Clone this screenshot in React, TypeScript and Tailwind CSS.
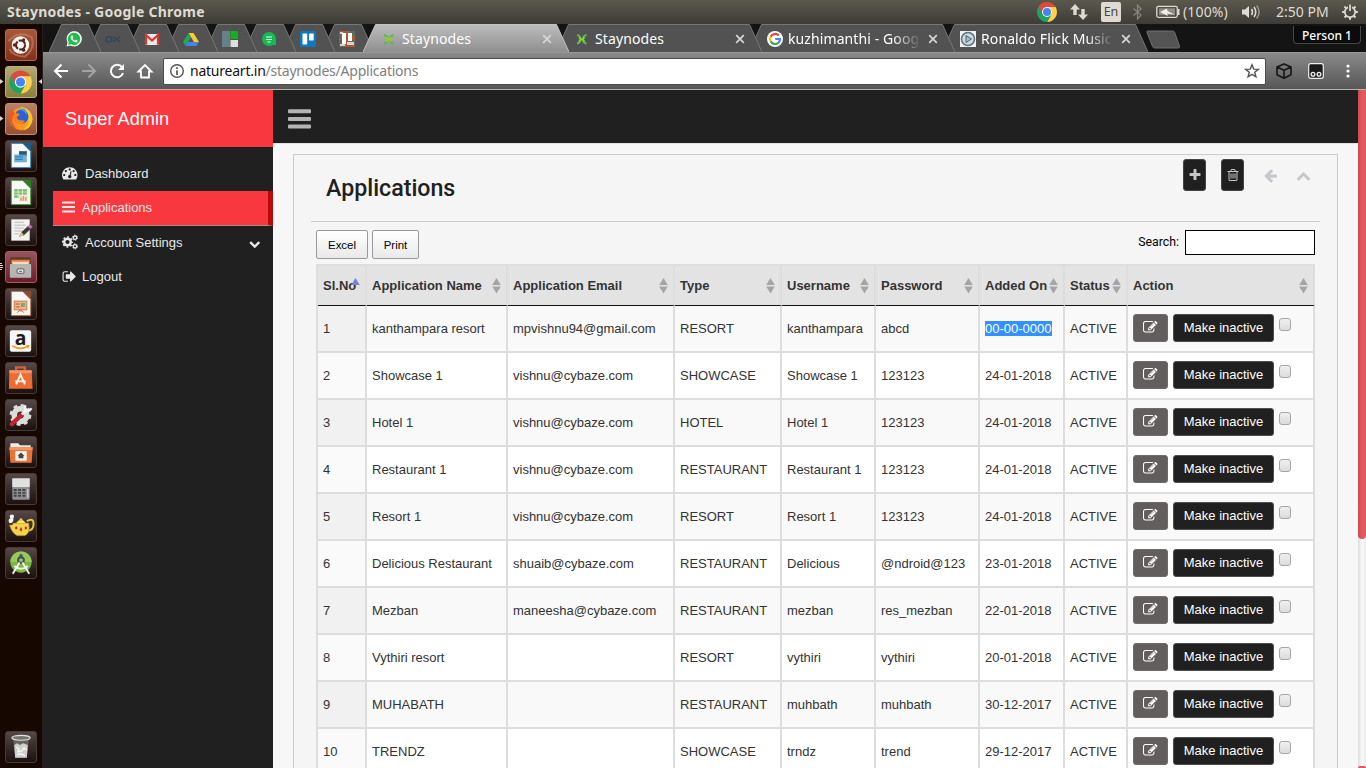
import React from "react";

const UBUNTU = "font-['Noto_Sans','Open_Sans',sans-serif]";

const GLYPHS = {
  edit: "M888 1184l116-116-152-152-116 116v56h96v96h56zm440-720q-16-16-33 1l-350 350q-17 17-1 33t33-1l350-350q17-17 1-33zm80 594v190q0 119-84.5 203.5t-203.5 84.5h-832q-119 0-203.5-84.5t-84.5-203.5v-832q0-119 84.5-203.5t203.5-84.5h832q63 0 117 25 15 7 18 23 3 17-9 29l-49 49q-14 14-32 8-23-6-45-6h-832q-66 0-113 47t-47 113v832q0 66 47 113t113 47h832q66 0 113-47t47-113v-126q0-13 9-22l64-64q15-15 35-7t20 29zm-96-738l288 288-672 672h-288v-288zm444 132l-92 92-288-288 92-92q28-28 68-28t68 28l152 152q28 28 28 68t-28 68z",
  plus: "M1600 736v192q0 40-28 68t-68 28h-416v416q0 40-28 68t-68 28h-192q-40 0-68-28t-28-68v-416h-416q-40 0-68-28t-28-68v-192q0-40 28-68t68-28h416v-416q0-40 28-68t68-28h192q40 0 68 28t28 68v416h416q40 0 68 28t28 68z",
  trash: "M704 736v576q0 14-9 23t-23 9h-64q-14 0-23-9t-9-23v-576q0-14 9-23t23-9h64q14 0 23 9t9 23zm256 0v576q0 14-9 23t-23 9h-64q-14 0-23-9t-9-23v-576q0-14 9-23t23-9h64q14 0 23 9t9 23zm256 0v576q0 14-9 23t-23 9h-64q-14 0-23-9t-9-23v-576q0-14 9-23t23-9h64q14 0 23 9t9 23zm128 724v-948h-896v948q0 22 7 40.5t14.5 27 10.5 8.5h832q3 0 10.500-8.500t14.500-27 7-40.500zm-672-1076h448l-48-117q-7-9-17-11h-317q-10 2-17 11zm928 32v64q0 14-9 23t-23 9h-96v948q0 83-47 143.500t-113 60.500h-832q-66 0-113-58.500t-47-141.500v-952h-96q-14 0-23-9t-9-23v-64q0-14 9-23t23-9h309l70-167q15-37 54-63t79-26h320q40 0 79 26t54 63l70 167h309q14 0 23 9t9 23z",
  arrowLeft: "M1664 896v128q0 53-32.5 90.5t-84.5 37.5h-704l293 294q38 36 38 90t-38 90l-75 76q-37 37-90 37-52 0-91-37l-651-652q-37-37-37-90 0-52 37-91l651-650q38-38 91-38 52 0 90 38l75 74q38 38 38 91t-38 91l-293 293h704q52 0 84.5 37.5t32.5 90.5z",
  chevronUp: "M1683 1331l-166 165q-19 19-45 19t-45-19l-531-531-531 531q-19 19-45 19t-45-19l-166-165q-19-19-19-45.5t19-45.5l742-741q19-19 45-19t45 19l742 741q19 19 19 45.5t-19 45.5z",
  chevronDown: "M1683 808l-742 741q-19 19-45 19t-45-19l-742-741q-19-19-19-45.5t19-45.5l166-165q19-19 45-19t45 19l531 531 531-531q19-19 45-19t45 19l166 165q19 19 19 45.5t-19 45.5z",
  signOut: "M704 1440q0 4 1 20t.5 26.5-3 23.5-10 19.5-20.5 6.5h-320q-119 0-203.5-84.5t-84.5-203.5v-704q0-119 84.5-203.5t203.5-84.5h320q13 0 22.5 9.5t9.5 22.5q0 4 1 20t.5 26.5-3 23.5-10 19.5-20.5 6.5h-320q-66 0-113 47t-47 113v704q0 66 47 113t113 47h312l11.5 1 11.5 3 8 5.5 7 9 2 13.5zm928-544q0 26-19 45l-544 544q-19 19-45 19t-45-19-19-45v-288h-448q-26 0-45-19t-19-45v-384q0-26 19-45t45-19h448v-288q0-26 19-45t45-19 45 19l544 544q19 19 19 45z",
  dashboard: "M384 1152q0-53-37.5-90.5t-90.5-37.5-90.5 37.5-37.5 90.5 37.5 90.5 90.5 37.5 90.5-37.5 37.5-90.5zm192-448q0-53-37.5-90.5t-90.5-37.5-90.5 37.5-37.5 90.5 37.5 90.5 90.5 37.5 90.5-37.5 37.5-90.5zm428 481l101-382q6-26-7.5-48.5t-38.5-29.5-48 6.5-30 39.5l-101 382q-60 5-107 43.5t-63 98.5q-20 77 20 146t117 89 146-20 89-117q16-60-6-117t-72-91zm660-33q0-53-37.5-90.5t-90.5-37.5-90.5 37.5-37.5 90.5 37.5 90.5 90.5 37.5 90.5-37.5 37.5-90.5zm-640-640q0-53-37.5-90.5t-90.5-37.5-90.5 37.5-37.5 90.5 37.5 90.5 90.5 37.5 90.5-37.5 37.5-90.5zm448 192q0-53-37.5-90.5t-90.5-37.5-90.5 37.5-37.5 90.5 37.5 90.5 90.5 37.5 90.5-37.5 37.5-90.5zm320 448q0 261-141 483-19 29-54 29h-1402q-35 0-54-29-141-221-141-483 0-182 71-348t191-286 286-191 348-71 348 71 286 191 191 286 71 348z",
};

function Glyph({ name, className = "" }: { name: keyof typeof GLYPHS; className?: string }) {
  return (
    <svg viewBox="0 0 1792 1792" fill="currentColor" className={`block shrink-0 ${className}`}>
      <path d={GLYPHS[name]} />
    </svg>
  );
}

function CogsIcon() {
  return (
    <svg viewBox="0 0 16 16" className="block h-4 w-4 shrink-0" fill="none" stroke="currentColor">
      <circle cx="5.500" cy="8" r="3.300" strokeWidth="2.400" />
      <circle cx="5.500" cy="8" r="4.900" strokeWidth="1.500" strokeDasharray="1.950 1.900" strokeDashoffset="1" />
      <circle cx="13" cy="3.700" r="1.700" strokeWidth="1.300" />
      <circle cx="13" cy="3.700" r="2.600" strokeWidth=".9" strokeDasharray="1.400 1.320" />
      <circle cx="13" cy="12.300" r="1.700" strokeWidth="1.300" />
      <circle cx="13" cy="12.300" r="2.600" strokeWidth=".9" strokeDasharray="1.400 1.320" />
    </svg>
  );
}

function ChromeLogo({ className }: { className: string }) {
  const sector = "M-8.66-5A10 10 0 0 1 8.66-5L0-5L-4.33 2.5Z";
  return (
    <svg viewBox="-10 -10 20 20" className={className}>
      <path d={sector} fill="#dd4b3e" />
      <path d={sector} fill="#fdd049" transform="rotate(120)" />
      <path d={sector} fill="#1da462" transform="rotate(240)" />
      <circle r="5" fill="#f4f4f4" />
      <circle r="4" fill="#4285f4" />
    </svg>
  );
}

/* ---------- desktop panel ---------- */

function TopPanel() {
  return (
    <div className={`flex h-6 items-center bg-linear-to-b from-[#5b594e] to-[#3d3c37] pl-[7px] text-[#dfdbd2] ${UBUNTU}`}>
      <span className="text-[14px] leading-6 font-bold tracking-[0.250px]">Staynodes - Google Chrome</span>
      <div className="ml-auto flex h-6 items-center">
        <ChromeLogo className="h-5 w-5" />
        <svg viewBox="0 0 18 16" className="ml-[13px] h-4 w-[18px]" fill="#dfdbd2">
          <path d="M5 0L10 5.500H6.700V11H3.300V5.500H0zM13 16L8 10.500H11.300V5H14.700V10.500H18z" />
        </svg>
        <span className="ml-[13px] flex h-5 w-5 items-center justify-center rounded-[2px] bg-[#dfdbd2] text-[12.500px] text-[#45443e]">En</span>
        <svg viewBox="0 0 9 16" className="ml-[12px] h-4 w-[9px]" fill="none" stroke="#88867c" strokeWidth="1.200">
          <path d="M0.500 4.500L8 11L4.500 15V1L8 5L0.500 11.500" />
        </svg>
        <svg viewBox="0 0 25 14" className="ml-[14px] h-[14px] w-[25px]">
          <rect x="0.800" y="1.300" width="20.500" height="11" rx="1.500" fill="none" stroke="#dfdbd2" strokeWidth="1.300" />
          <rect x="3" y="3.300" width="16" height="7" fill="#8f8c83" />
          <path d="M22 4h1.500v6H22z" fill="#dfdbd2" />
          <path d="M4 7L11 3.500L11.500 6L18.500 9.500L11 8.500L12 11z" fill="#f2efe8" />
        </svg>
        <span className="ml-[2px] w-[47px] text-[14px] leading-6 tracking-[0.150px] whitespace-nowrap">(100%)</span>
        <svg viewBox="0 0 20 16" className="ml-[11px] h-4 w-5" fill="none" stroke="#dfdbd2" strokeWidth="1.500">
          <path d="M1 5.500h3L8 2v12L4 10.500H1z" fill="#dfdbd2" stroke="none" />
          <path d="M10.500 5Q12.500 8 10.500 11" />
          <path d="M13 3Q16.500 8 13 13" />
          <path d="M15.700 1.500Q20.500 8 15.700 14.500" stroke="#99968c" />
        </svg>
        <span className="ml-[15px] w-[54px] text-[14px] leading-6 whitespace-nowrap">2:50 PM</span>
        <svg viewBox="-8 -8 16 16" className="mr-[8px] ml-[12px] h-4 w-4" fill="none" stroke="#dfdbd2">
          <path d="M-2-4.800A5.200 5.200 0 1 0 2-4.800" strokeWidth="1.700" />
          <path d="M0-7.500V-1" strokeWidth="1.700" />
          <path d="M5 0H7.800M-5 0H-7.800M0 5V7.800M3.700 3.700L5.500 5.500M-3.700 3.700L-5.500 5.500M3.900-3.900L5.500-5.500M-3.900-3.900L-5.500-5.500" strokeWidth="2" />
        </svg>
      </div>
    </div>
  );
}

/* ---------- launcher ---------- */

const DARK_TILE = "bg-linear-to-b from-[#554846] to-[#1d1210] border-[#463a37]";

function DocPage({ accent, dark, children }: { accent: string; dark: string; children: React.ReactNode }) {
  return (
    <>
      <path d="M6 3H18L26 11V28H6z" fill="#f7f8f7" stroke={accent} />
      <path d="M17.500 2.500H26.500V11.500z" fill={dark} />
      {children}
    </>
  );
}

const launcher: { tile: string; art: React.ReactNode }[] = [
  {
    tile: "bg-linear-to-b from-[#a9583a] to-[#83301a] border-[#b06a50]",
    art: (
      <>
        <path d="M3 12Q14 0 27 8Q31 20 20 28Q8 28 4 20" fill="none" stroke="#c58a74" strokeWidth="2" opacity=".6" />
        <circle cx="15.500" cy="16" r="9" fill="#fdf6f2" />
        <circle cx="15.500" cy="16" r="4.700" fill="none" stroke="#54231b" strokeWidth="2.200" strokeDasharray="8.600 1.240" />
        <circle cx="9.200" cy="16" r="1.700" fill="#54231b" />
        <circle cx="18.700" cy="10.600" r="1.700" fill="#54231b" />
        <circle cx="18.700" cy="21.400" r="1.700" fill="#54231b" />
      </>
    ),
  },
  {
    tile: "bg-linear-to-b from-[#b3a870] to-[#8a7f3e] border-[#b9b183]",
    art: (
      <g transform="translate(15.500 16) scale(1.180)">
        <path d="M-8.660-5A10 10 0 0 1 8.660-5L0-5L-4.330 2.500Z" fill="#dd4b3e" />
        <path d="M-8.660-5A10 10 0 0 1 8.660-5L0-5L-4.330 2.500Z" fill="#fdd049" transform="rotate(120)" />
        <path d="M-8.660-5A10 10 0 0 1 8.660-5L0-5L-4.330 2.500Z" fill="#1da462" transform="rotate(240)" />
        <circle r="5" fill="#f4f4f4" />
        <circle r="4" fill="#4285f4" />
      </g>
    ),
  },
  {
    tile: "bg-linear-to-b from-[#b98264] to-[#96512f] border-[#c09076]",
    art: (
      <>
        <circle cx="16" cy="16" r="11.500" fill="#ff9420" />
        <path d="M15 3.500Q27 4 28 16Q27 26 18 27.800Q25 22 23.500 14Q22 8 15 3.500z" fill="#ffc62a" />
        <circle cx="16.500" cy="13.500" r="7.200" fill="#2a62d8" />
        <path d="M15 6.500Q20 7.500 21.500 12Q22.500 8 19.500 5.500Q17 4.500 15 6.500z" fill="#35a5ee" />
        <path d="M6 6.500L9.500 10Q12 9.500 14.500 11Q14 13 11.500 14Q12 17 15.500 17.500Q18 17 20 18Q18 21.500 14 21Q8 20 7 14L4.500 16Q4 10 6 6.500z" fill="#ff8016" />
        <path d="M6 6.500Q4 10 4.500 17Q6 25 13 27.500Q5 21 7.500 13L9.500 10z" fill="#f5532a" />
      </>
    ),
  },
  {
    tile: DARK_TILE,
    art: (
      <DocPage accent="#3a8cc0" dark="#1d5c8c">
        <rect x="14" y="11" width="8" height="5" fill="#235a7c" />
        <rect x="9" y="14.500" width="13" height="8" fill="#5fa9d4" opacity=".9" />
        <path d="M10 17h8M10 19.500h8" stroke="#2c77a8" />
      </DocPage>
    ),
  },
  {
    tile: DARK_TILE,
    art: (
      <DocPage accent="#47a838" dark="#2c7f20">
        <rect x="9" y="12" width="13" height="9" fill="#76bb5f" />
        <path d="M9 15h13M9 18h13M13 12v9M17.500 12v9" stroke="#e8f6e4" strokeWidth=".8" />
        <rect x="14" y="18" width="9" height="6.500" fill="#f6e4cd" />
        <path d="M16 24v-3M18.500 24v-5M21 24v-3.500" stroke="#e7965a" strokeWidth="1.600" />
      </DocPage>
    ),
  },
  {
    tile: DARK_TILE,
    art: (
      <>
        <rect x="6" y="5" width="19" height="22" fill="#f2f2ee" />
        <path d="M9 8h10M9 11h12M9 14h10M9 17h8M9 20h5" stroke="#b7b7b4" />
        <path d="M14 23L16.500 18L23 12L26 15L19 21.500z" fill="#3c3c35" />
        <path d="M23 12L25 10L28 12.500L26 15z" fill="#c96aac" />
        <path d="M14 23L16.500 18L19 21.500z" fill="#e2c27d" />
      </>
    ),
  },
  {
    tile: "bg-linear-to-b from-[#9a5560] to-[#6a1c2b] border-[#a35b68]",
    art: (
      <>
        <rect x="5" y="6" width="21" height="8" fill="#5b3a28" />
        <path d="M6 8.500h19v4H6z" fill="#e48245" />
        <path d="M7 10.500h17v3H7z" fill="#f4dcc0" />
        <rect x="4.500" y="13" width="22" height="14" rx="1" fill="#b5b5b2" />
        <rect x="12" y="18" width="7" height="4.500" rx=".5" fill="#e8e8e6" stroke="#5b5b58" />
        <path d="M14 20.500h3" stroke="#5b5b58" />
      </>
    ),
  },
  {
    tile: DARK_TILE,
    art: (
      <DocPage accent="#c9724b" dark="#8f4a27">
        <rect x="9" y="13" width="13" height="9" fill="#f0b28b" stroke="#d07647" />
        <rect x="16" y="15" width="4" height="4" fill="#6cae72" />
        <path d="M10.500 16h4M10.500 19h4M12 25l2-2h3l2 2" stroke="#c15a2b" fill="none" />
      </DocPage>
    ),
  },
  {
    tile: DARK_TILE,
    art: (
      <>
        <rect x="4.500" y="5" width="22" height="22" rx="2" fill="#f7f7f7" />
        <text x="15.500" y="20" textAnchor="middle" fontFamily="Open Sans, sans-serif" fontWeight="700" fontSize="20" fill="#1c1c1c">a</text>
        <path d="M7 21Q15 26 23 21.500" fill="none" stroke="#f79a1c" strokeWidth="1.700" />
        <path d="M21 20.500l4-.5-1.500 4z" fill="#f79a1c" />
      </>
    ),
  },
  {
    tile: DARK_TILE,
    art: (
      <>
        <path d="M11 9V5h9v4" fill="none" stroke="#d0633f" strokeWidth="2.500" />
        <path d="M4 8H27L28 27H3.500z" fill="#ec6c33" />
        <path d="M4 8H27V11H4z" fill="#f39564" />
        <path d="M11 22.500L15.500 12.500L20 22.500M10 19.500H21" fill="none" stroke="#fff3ea" strokeWidth="2" />
      </>
    ),
  },
  {
    tile: DARK_TILE,
    art: (
      <>
        <circle cx="15.500" cy="16" r="6.500" fill="none" stroke="#dcdcd9" strokeWidth="6" />
        <circle cx="15.500" cy="16" r="10" fill="none" stroke="#dcdcd9" strokeWidth="2.500" strokeDasharray="4 3.850" />
        <path d="M6.500 25.500L17 15.500" stroke="#c22231" strokeWidth="4.500" strokeLinecap="round" />
        <path d="M17 15.500L22 10.500" stroke="#f4f4f2" strokeWidth="3" />
        <path d="M20.500 6Q19.500 10.500 22 11.500Q25.500 12 26.500 9" fill="none" stroke="#f4f4f2" strokeWidth="2.500" />
      </>
    ),
  },
  {
    tile: DARK_TILE,
    art: (
      <>
        <path d="M5 7h8l2 2h11v4H5z" fill="#f1ece6" />
        <path d="M4 11H28L27 27H5z" fill="#eb7236" />
        <path d="M4 11H28V14H4z" fill="#f4965f" />
        <rect x="10" y="15" width="12" height="10" rx="1" fill="#f4f2ee" />
        <path d="M16 16.500L19.500 20H18.500V22.500H13.500V20H12.500z" fill="#474540" />
      </>
    ),
  },
  {
    tile: DARK_TILE,
    art: (
      <>
        <rect x="7" y="5" width="18" height="22" rx="1" fill="#8d9090" />
        <rect x="7" y="5" width="18" height="9" fill="#dfe1df" />
        <path d="M8.500 17h3M13 17h3M17.500 17h3M8.500 20h3M13 20h3M17.500 20h3M8.500 23h3M13 23h3M17.500 23h3" stroke="#3f4344" strokeWidth="2" />
        <path d="M23 16v9" stroke="#c9cccb" strokeWidth="1.500" />
      </>
    ),
  },
  {
    tile: DARK_TILE,
    art: (
      <>
        <path d="M22 11Q29 7 29 14Q29 21 22 21" fill="none" stroke="#e9c93c" strokeWidth="2" />
        <path d="M8 13H24Q26 24 20 26H12Q7 24 4 15L7 15z" fill="#f3d44b" stroke="#9c7f15" strokeWidth=".6" />
        <path d="M11 13Q16 6 21 13z" fill="#f8e27a" />
        <circle cx="16" cy="9.500" r="1.500" fill="#e9c93c" />
        <path d="M11 16l1.500 2-1.500 2-1.500-2zM16 17l1.500 2.500-1.500 2.500-1.500-2.500zM21 16l1.500 2-1.500 2-1.500-2z" fill="#c62a2a" />
        <path d="M4 13Q2 9 5 8Q3 4 7 4Q10 5 8 8Q9 11 6 13z" fill="#f5f5f5" />
      </>
    ),
  },
  {
    tile: DARK_TILE,
    art: (
      <>
        <circle cx="16" cy="15" r="11" fill="#79b83e" />
        <path d="M5 15A11 11 0 0 1 27 15z" fill="#95c95b" />
        <circle cx="16" cy="13" r="3" fill="none" stroke="#4a4f50" strokeWidth="2" />
        <path d="M16 7v4" stroke="#4a4f50" strokeWidth="3" />
        <path d="M14.500 15.500L7.500 27M17.500 15.500L24.500 27M9 19Q16 25 23 19" fill="none" stroke="#f3f3f3" strokeWidth="2" />
      </>
    ),
  },
];

const trashArt = (
  <>
    <path d="M8 8L10 27H22L24 8z" fill="#73706d" opacity=".8" />
    <ellipse cx="16" cy="6.500" rx="9.500" ry="2.500" fill="#77736f" stroke="#e3e3e0" strokeWidth="1.200" />
    <path d="M9 14l3-2 3 2 3-2 5 2-1 13H10z" fill="#cfcfcb" />
    <path d="M11 16l3 2-1 3 4-1 2-3 3 2M12 24l4-1 4 2" fill="none" stroke="#f6f6f4" strokeWidth="1.500" />
  </>
);

function Tile({ tile, children }: { tile: string; children: React.ReactNode }) {
  return (
    <div className={`h-8 w-8 shrink-0 overflow-hidden rounded-[3px] border ${tile}`}>
      <svg viewBox="0.500 0.500 31 31" className="block h-[30px] w-[30px]">{children}</svg>
    </div>
  );
}

function Launcher() {
  return (
    <aside className="relative flex w-[43px] shrink-0 flex-col gap-[5px] border-r border-[#241f1c] bg-[#170701] pt-[5px] pb-[5px] pl-[5px]">
      {launcher.map((item, i) => (
        <Tile key={i} tile={item.tile}>{item.art}</Tile>
      ))}
      <div className="mt-auto">
        <Tile tile={DARK_TILE}>{trashArt}</Tile>
      </div>
      <svg viewBox="0 0 43 300" className="pointer-events-none absolute top-0 left-0 h-[300px] w-[43px]" fill="#d9d4d0">
        <path d="M0 55l3.500 2.500L0 60zM0 92l3.500 2.500L0 97zM42 55l-3.500 2.500L42 60z" />
        <path d="M0 239h2v1H0zM0 241h3v1H0zM0 243h3v1H0zM0 245h2v1H0z" />
      </svg>
    </aside>
  );
}

/* ---------- browser chrome ---------- */

const StaynodesIcon = (
  <>
    <path d="M3 4Q6 4.500 6.500 7.500V9Q6 12 3 12.500M12.500 4Q9.500 4.500 9 7.500V9Q9.500 12 12.500 12.500" fill="none" stroke="#5cb85c" strokeWidth="2" />
    <path d="M5 6.500L7 8.300L5 10.500M10.500 6.500L8.500 8.300L10.500 10.500M6 8.300H10" fill="none" stroke="#92d11f" strokeWidth="1.800" />
  </>
);

const smallTabs: React.ReactNode[] = [
  <>
    <path d="M0.500 15.500L1.600 11.500A7.600 7.600 0 1 1 4.500 14.400z" fill="#fff" />
    <path d="M2 14L2.800 11.200A6.200 6.200 0 1 1 5 13.300z" fill="#1fc04a" />
    <path d="M5.500 4.500Q4 5.500 5 8Q7 11 10 11.500Q12 11 11.500 9.500L9.800 8.800L9 9.700Q7 9 6.500 7L7.200 6.200L6.500 4.500z" fill="#fff" />
  </>,
  <g fill="none" stroke="#33485f" strokeWidth="1.600">
    <ellipse cx="3.800" cy="8.300" rx="3" ry="2.600" />
    <path d="M8 5.800L15 10.800M15 5.800L8 10.800" />
  </g>,
  <>
    <path d="M1 3h14v11H1z" fill="#e9e9e9" />
    <path d="M2 13.800V4L8 9.500L14 4V13.800" fill="none" stroke="#d8382c" strokeWidth="2.200" />
  </>,
  <>
    <path d="M5.500 2H10.500L16 11H11z" fill="#f9cb2c" />
    <path d="M5.500 2L8 6.500L2.700 15L0 11z" fill="#27a35c" />
    <path d="M5 11H16L13.300 15H2.700z" fill="#4582ea" />
  </>,
  <>
    <path d="M0 0h8v16H0z" fill="#68808a" />
    <path d="M8.500 0H16V8H8.500z" fill="#0cb31a" />
    <path d="M8.500 9H16V16H8.500z" fill="#dedede" />
  </>,
  <>
    <circle cx="8" cy="8" r="7" fill="#14bb55" />
    <path d="M10 14h5V9z" fill="#14bb55" />
    <path d="M5 6h6M5 8.500h6M6.500 11h3" stroke="#e6fbe9" strokeWidth="1.100" />
  </>,
  <>
    <rect width="16" height="16" rx="2" fill="#0e79c0" />
    <rect x="2.500" y="2.500" width="4.700" height="11" rx=".8" fill="#fff" />
    <rect x="9" y="2.500" width="4.700" height="7" rx=".8" fill="#fff" />
  </>,
  <>
    <rect width="16" height="16" fill="#a8583f" />
    <path d="M0 9h5v7H0zM11 0h5v4h-5zM0 3h2v4H0zM13 9h3v4h-3z" fill="#4f6f62" />
    <path d="M1 13h5v2H1zM8 11h7v3H8zM1 1h3v2H1z" fill="#e0d2c0" />
    <path d="M3 2h4v11H3zM9 2h4v8H9z" fill="#fff" />
  </>,
];

const wideTabs: { title: string; icon: React.ReactNode; active?: boolean }[] = [
  { title: "Staynodes", icon: StaynodesIcon, active: true },
  { title: "Staynodes", icon: StaynodesIcon },
  {
    title: "kuzhimanthi - Goog",
    icon: (
      <>
        <circle cx="8" cy="8" r="8" fill="#fff" />
        <g fill="none" strokeWidth="2.200">
          <path d="M11.800 4.600A5 5 0 0 0 3.600 5.700" stroke="#ea4335" />
          <path d="M3.600 5.700A5 5 0 0 0 3.600 10.300" stroke="#fbbc05" />
          <path d="M3.600 10.300A5 5 0 0 0 11.300 11.800" stroke="#34a853" />
          <path d="M11.300 11.800A5 5 0 0 0 13 8H8.200" stroke="#4285f4" />
        </g>
      </>
    ),
  },
  {
    title: "Ronaldo Flick Music",
    icon: (
      <>
        <rect width="16" height="16" fill="#f0f2f3" />
        <circle cx="8" cy="8" r="6.500" fill="#cfdae0" stroke="#5d7280" strokeWidth="1.500" />
        <path d="M6 4.500L11.500 8L6 11.500z" fill="#a9bcc6" stroke="#4d6474" />
      </>
    ),
  },
];

function TabShape({ width, active }: { width: number; active?: boolean }) {
  return (
    <svg viewBox={`0 0 ${width} 28`} className="absolute inset-0 h-full w-full" preserveAspectRatio="none">
      <defs>
        <linearGradient id="tabActive" x1="0" y1="0" x2="0" y2="1">
          <stop offset="0" stopColor="#bdbdbd" />
          <stop offset="1" stopColor="#8f8f8f" />
        </linearGradient>
      </defs>
      <path
        d={`M0 28L12.500 0.500H${width - 12.500}L${width} 28`}
        fill={active ? "url(#tabActive)" : "#525252"}
        stroke={active ? "#c2c2c2" : "#777"}
        strokeWidth="1"
      />
    </svg>
  );
}

function TabStrip() {
  return (
    <div className={`relative flex h-7 bg-[#141414] pl-[6px] ${UBUNTU}`}>
      {smallTabs.map((icon, i) => (
        <div key={i} className="relative -mr-[13px] h-7 w-[52px] shrink-0 pt-[7px] pl-[17px]" style={{ zIndex: 20 - i }}>
          <TabShape width={52} />
          <svg viewBox="0 0 16 16" className="relative block h-4 w-4">{icon}</svg>
        </div>
      ))}
      <div className="w-[2px] shrink-0" />
      {wideTabs.map((tab, i) => (
        <div
          key={i}
          className="relative -mr-[13px] flex h-7 w-[206px] shrink-0 items-center pt-[2px] pr-[16px] pl-[18px]"
          style={{ zIndex: tab.active ? 30 : 11 - i }}
        >
          <TabShape width={206} active={tab.active} />
          <svg viewBox="0 0 16 16" className="relative h-4 w-4 shrink-0">{tab.icon}</svg>
          <span
            className={`relative ml-[5px] w-[134px] text-[14px] leading-5 tracking-[0.100px] whitespace-nowrap text-white ${
              i > 1 ? "mask-[linear-gradient(to_right,#000_105px,transparent_133px)]" : ""
            }`}
          >
            {tab.title}
          </span>
          <svg viewBox="0 0 10 10" className="relative ml-[6px] h-[10px] w-[10px]" stroke="#d6d6d6" strokeWidth="1.700">
            <path d="M1.200 1.200L8.800 8.800M8.800 1.200L1.200 8.800" />
          </svg>
        </div>
      ))}
      <svg viewBox="0 0 36 20" className="mt-[6px] ml-[11px] h-5 w-9">
        <path d="M1.500 1H26.500Q28 1 28.500 2L33.500 16Q34 18 32 18H8.500Q7 18 6.500 16.500L1 2.500Q0.500 1 1.500 1z" fill="#545454" stroke="#6f6f6f" />
      </svg>
      <div className="mt-[2px] mr-[5px] ml-auto h-[18px] w-[68px] rounded-b-[4px] border border-t-0 border-[#474747] bg-[#0b0b0b] text-center text-[12px] leading-[19px] font-medium text-white">
        Person 1
      </div>
    </div>
  );
}

function Toolbar() {
  return (
    <div className={`flex h-[38px] items-center border-t border-b border-t-[#989898] border-b-[#b9b4b1] bg-linear-to-b from-[#8a8a8a] to-[#575757] ${UBUNTU}`}>
      <svg viewBox="0 0 120 20" className="h-5 w-[120px] shrink-0" fill="none" stroke="#fff" strokeWidth="2">
        <path d="M25 10H12.500M18.500 3.500L12 10L18.500 16.500" />
        <path d="M39 10H51.500M45.500 3.500L52 10L45.500 16.500" stroke="#a3a3a3" />
        <path d="M79 6.200A6.200 6.200 0 1 0 80 12" />
        <path d="M81 3V9H75z" fill="#fff" stroke="none" />
        <path d="M95.500 10.500L102 4L108.500 10.500H106V16.500H98V10.500z" strokeWidth="1.800" />
      </svg>
      <div className="flex h-[27px] w-[1103px] items-center rounded-[2px] border border-[#4a4a4a] bg-white pl-[5px]">
        <svg viewBox="0 0 16 16" className="h-4 w-4" fill="none" stroke="#555" strokeWidth="1.400">
          <circle cx="8" cy="8" r="6.300" />
          <path d="M8 7.200V12M8 4.300V6" strokeWidth="1.700" />
        </svg>
        <span className="ml-[5px] text-[14px] leading-6 tracking-[-0.230px] whitespace-nowrap text-[#808080]">
          <span className="text-[#111]">natureart.in</span>/staynodes/Applications
        </span>
        <svg viewBox="0 0 16 16" className="mr-[5px] ml-auto h-4 w-4" fill="none" stroke="#555" strokeWidth="1.400">
          <path d="M8 1.800L9.700 6.100L14.300 6.400L10.700 9.300L11.900 13.800L8 11.300L4.100 13.800L5.300 9.300L1.700 6.400L6.300 6.100z" />
        </svg>
      </div>
      <svg viewBox="0 0 16 16" className="ml-[10px] h-4 w-4" fill="none" stroke="#161616" strokeWidth="1.600" strokeLinejoin="round">
        <path d="M8 1L15 4V11.800L8 15.200L1 11.800V4zM1 4L8 7.300L15 4M8 7.300V15" />
      </svg>
      <svg viewBox="0 0 16 16" className="ml-[16px] h-4 w-4">
        <rect x=".7" y=".7" width="14.600" height="14.600" rx="2" fill="#1b1b1b" stroke="#f0f0f0" strokeWidth="1.200" />
        <circle cx="5" cy="11.300" r="1.900" fill="#333" stroke="#f0f0f0" strokeWidth="1.300" />
        <circle cx="11" cy="11.300" r="1.900" fill="#333" stroke="#f0f0f0" strokeWidth="1.300" />
      </svg>
      <svg viewBox="0 0 4 14" className="ml-[22px] h-[14px] w-1" fill="#fff">
        <circle cx="2" cy="2" r="1.600" />
        <circle cx="2" cy="7" r="1.600" />
        <circle cx="2" cy="12" r="1.600" />
      </svg>
    </div>
  );
}

/* ---------- page ---------- */

function Sidebar() {
  return (
    <nav className="w-[230px] shrink-0 bg-[#202020] text-[13px] text-[#e9e9e9]">
      <div className="h-[57px] bg-[#f8383e] pl-[22px] text-[18.200px] leading-[58px] text-white">Super Admin</div>
      <div className="mt-[9px] pl-[10px]">
        <div className="flex h-[35px] items-center pl-[9px]">
          <Glyph name="dashboard" className="mb-px h-[15.500px] w-[15.500px]" />
          <span className="ml-[7.500px]">Dashboard</span>
        </div>
        <div className="flex h-[35px] items-center border-r-[5px] border-b border-r-[#b80a0c] border-b-[#a9908f] bg-[#f8383e] pl-[9px]">
          <svg viewBox="0 0 13 12" className="mb-[2px] h-3 w-[13px]" fill="currentColor">
            <path d="M0 .5h13v2H0zM0 5h13v2H0zM0 9.500h13v2H0z" />
          </svg>
          <span className="ml-[7px]">Applications</span>
        </div>
        <div className="flex h-[34px] items-center pr-[13px] pl-[9px]">
          <span className="mb-[2px]"><CogsIcon /></span>
          <span className="ml-[7px]">Account Settings</span>
          <Glyph name="chevronDown" className="mt-[2px] ml-auto h-[11.500px] w-[11.500px]" />
        </div>
        <div className="flex h-[34px] items-center pl-[8.500px]">
          <Glyph name="signOut" className="mb-[2px] h-[15px] w-[15px]" />
          <span className="ml-[5.500px]">Logout</span>
        </div>
      </div>
    </nav>
  );
}

const headers = ["Sl.No", "Application Name", "Application Email", "Type", "Username", "Password", "Added On", "Status", "Action"];

const rows = [
  ["kanthampara resort", "mpvishnu94@gmail.com", "RESORT", "kanthampara", "abcd", "00-00-0000"],
  ["Showcase 1", "vishnu@cybaze.com", "SHOWCASE", "Showcase 1", "123123", "24-01-2018"],
  ["Hotel 1", "vishnu@cybaze.com", "HOTEL", "Hotel 1", "123123", "24-01-2018"],
  ["Restaurant 1", "vishnu@cybaze.com", "RESTAURANT", "Restaurant 1", "123123", "24-01-2018"],
  ["Resort 1", "vishnu@cybaze.com", "RESORT", "Resort 1", "123123", "24-01-2018"],
  ["Delicious Restaurant", "shuaib@cybaze.com", "RESTAURANT", "Delicious", "@ndroid@123", "23-01-2018"],
  ["Mezban", "maneesha@cybaze.com", "RESTAURANT", "mezban", "res_mezban", "22-01-2018"],
  ["Vythiri resort", "", "RESORT", "vythiri", "vythiri", "20-01-2018"],
  ["MUHABATH", "", "RESTAURANT", "muhbath", "muhbath", "30-12-2017"],
  ["TRENDZ", "", "SHOWCASE", "trndz", "trend", "29-12-2017"],
];

const CELL = "border-r-2 border-b-2 border-[#ddd] p-0 pl-[5px] align-middle whitespace-nowrap";

function ApplicationsTable() {
  return (
    <table className="mt-[5px] w-[999px] table-fixed border-separate border-spacing-0 border-t-2 border-l-2 border-[#ddd] text-left text-[13px] leading-[18px] text-[#333]">
      <colgroup>
        <col className="w-[49px]" />
        <col className="w-[141px]" />
        <col className="w-[167px]" />
        <col className="w-[107px]" />
        <col className="w-[94px]" />
        <col className="w-[104px]" />
        <col className="w-[85px]" />
        <col className="w-[63px]" />
        <col className="w-[187px]" />
      </colgroup>
      <thead>
        <tr className="h-10">
          {headers.map((h, i) => (
            <th key={h} className="relative border-r-2 border-b border-r-[#ddd] border-b-[#111] bg-[#e3e3e3] p-0 pl-[5px] font-bold whitespace-nowrap">
              {h}
              <svg viewBox="0 0 9 16" className="absolute top-[12px] right-[5px] h-4 w-[9px]" fill={i === 0 ? "#7a80dd" : "#a5a5a5"}>
                <path d="M4.500 0L8.800 7H.2z" />
                {i > 0 && <path d="M4.500 15.500L8.800 8.500H.2z" />}
              </svg>
            </th>
          ))}
        </tr>
      </thead>
      <tbody>
        {rows.map((row, r) => (
          <tr key={r} className={`h-[47px] ${r % 2 ? "bg-white" : "bg-[#f9f9f9]"}`}>
            <td className={`${CELL} ${r % 2 ? "bg-[#fafafa]" : "bg-[#f1f1f1]"}`}>{r + 1}</td>
            {row.map((value, c) => (
              <td key={c} className={CELL}>
                {r === 0 && c === 5 ? <span className="bg-[#3390ff] text-white">{value}</span> : value}
              </td>
            ))}
            <td className={CELL}>ACTIVE</td>
            <td className={CELL}>
              <div className="mb-[2px] flex h-[28px] items-start">
                <button className="flex h-[28px] w-[35px] items-center justify-center rounded-[3px] border border-[#6e6b6a] bg-[#625e5d] text-white">
                  <Glyph name="edit" className="mb-px h-[14.500px] w-[14.500px]" />
                </button>
                <button className="ml-[5px] h-[28px] w-[101px] rounded-[3px] border border-[#4e4e4e] bg-[#202020] text-[13px] leading-[18px] text-white">
                  Make inactive
                </button>
                <span className="mt-[4px] ml-[5px] h-[13px] w-3 rounded-[3px] border border-[#a5a5a5] bg-linear-to-b from-[#efefef] to-[#dcdcdc]" />
              </div>
            </td>
          </tr>
        ))}
      </tbody>
    </table>
  );
}

function Page() {
  return (
    <div className="flex min-h-0 flex-1 overflow-hidden bg-[#f7f7f7] font-['Liberation_Sans',Arial,sans-serif]">
      <Sidebar />
      <main className="min-w-0 flex-1">
        <div className="flex h-[54px] items-center border-b border-[#e3e3e6] bg-[#202020] pl-[15px]">
          <svg viewBox="0 0 23 20" className="mt-[5px] h-5 w-[23px]" fill="#b4b4b4">
            <rect y=".3" width="23" height="4" rx="1" />
            <rect y="8" width="23" height="4" rx="1" />
            <rect y="15.500" width="23" height="4" rx="1" />
          </svg>
        </div>
        <section className="mt-[10px] mr-[20px] ml-[20px] h-[700px] border border-[#ccc] bg-[#f5f5f5] px-[17px]">
          <div className="flex h-[67px] items-start border-b border-[#ccc] pl-[15px]">
            <h2 className="mt-[18px] font-['Roboto',sans-serif] text-[23.200px] leading-[30px] font-medium text-[#202020]">Applications</h2>
            <div className="mt-[4px] mr-[9px] ml-auto flex h-8 items-center text-[#c5c7cb]">
              <button className="flex h-8 w-[23px] items-center justify-center rounded-[3px] border border-[#444] bg-[#202020]">
                <Glyph name="plus" className="h-[14px] w-[14px]" />
              </button>
              <button className="ml-[15px] flex h-8 w-[23px] items-center justify-center rounded-[3px] border border-[#444] bg-[#202020]">
                <Glyph name="trash" className="h-[14px] w-[14px]" />
              </button>
              <Glyph name="arrowLeft" className="ml-[19px] h-[15px] w-[15px]" />
              <Glyph name="chevronUp" className="ml-[18px] h-[15px] w-[15px]" />
            </div>
          </div>
          <div className="px-[5px] pt-[8px]">
            <div className="flex h-[29px] items-start">
              <button className="h-[29px] w-[52px] rounded-[2px] border border-[#999] bg-linear-to-b from-white to-[#e9e9e9] pt-[2px] text-[11.440px] text-black">Excel</button>
              <button className="ml-[4px] h-[29px] w-[47px] rounded-[2px] border border-[#999] bg-linear-to-b from-white to-[#e9e9e9] pt-[2px] text-[11.440px] text-black">Print</button>
              <label className="ml-auto flex items-center font-['Roboto',sans-serif] text-[12.300px] text-black">
                Search:
                <input className="ml-[6px] h-[25px] w-[130px] border border-black bg-white" />
              </label>
            </div>
            <ApplicationsTable />
          </div>
        </section>
      </main>
      <div className="flex w-2 shrink-0 flex-col justify-between bg-linear-to-r from-[#dcdcdc] via-[#fafafa] to-[#ececec]">
        <div className="h-[449px] rounded-b-[4px] bg-linear-to-r from-[#cc4b50] via-[#e25a5f] to-[#dd5a5f]" />
        <div className="h-[2px] rounded-t-[4px] bg-[#df565b]" />
      </div>
    </div>
  );
}

export default function App() {
  return (
    <div className="flex h-[768px] w-[1366px] flex-col overflow-hidden">
      <TopPanel />
      <div className="flex min-h-0 flex-1">
        <Launcher />
        <div className="flex min-w-0 flex-1 flex-col">
          <TabStrip />
          <Toolbar />
          <Page />
        </div>
      </div>
    </div>
  );
}
